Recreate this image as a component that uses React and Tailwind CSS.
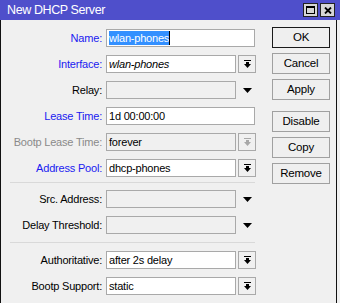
import React from "react";

const FONT = { fontFamily: '"Liberation Sans", Arial, sans-serif' };

const ComboArrow = ({ disabled }) => (
    <svg width="7" height="8" viewBox="0 0 7 8" shapeRendering="crispEdges" className={disabled ? "fill-[#a8a8a8]" : "fill-black"}>
        <rect x="0" y="0" width="7" height="1" />
        <rect x="2" y="2" width="3" height="2" />
        <path d="M0 4h7l-3.5 4z" shapeRendering="geometricPrecision" />
    </svg>
);

const DropTriangle = () => (
    <svg width="9" height="5" viewBox="0 0 9 5" className="fill-black">
        <path d="M0 0h9l-4.5 5z" />
    </svg>
);

const labelColors = {
    blue: "text-[#1a1af0]",
    grey: "text-[#8a8a8a]",
    black: "text-black",
};

const Row = ({ label, color = "black", value, italic, selected, kind }) => {
    // kind: text | combo | disabled | readonly
    const grey = kind === "disabled" || kind === "readonly";
    return (
        <div className="flex items-center h-[18px]">
            <div className={`w-[101px] text-right text-[11px] tracking-[-0.2px] whitespace-nowrap ${labelColors[color]}`}>
                {label}:
            </div>
            <div className="ml-[4px] flex items-center">
                <div
                    className={`h-[18px] border border-[#a9a9a9] flex items-center pl-[2px] text-[11px] tracking-[-0.2px] text-black overflow-hidden whitespace-nowrap ${kind === "text" ? "w-[149px]" : "w-[130px]"} ${grey ? "bg-[#f0f0f0]" : "bg-white"} ${italic ? "italic" : ""}`}
                >
                    {selected ? (
                        <>
                            <span className="bg-[#3390ff] text-white h-[14px] leading-[14px]">{value}</span>
                            <span className="w-px h-[14px] bg-black" />
                        </>
                    ) : (
                        value
                    )}
                </div>
                {kind === "combo" || kind === "readonly" ? (
                    <div className="ml-[2px] w-[18px] h-[18px] border border-[#a9a9a9] bg-[#f0f0f0] flex items-center justify-center">
                        <ComboArrow disabled={kind === "readonly"} />
                    </div>
                ) : null}
                {kind === "disabled" ? (
                    <div className="ml-[2px] w-[18px] h-[18px] flex items-center justify-center">
                        <DropTriangle />
                    </div>
                ) : null}
            </div>
        </div>
    );
};

const Separator = ({ className }) => (
    <div className={`ml-[9px] w-[245px] h-px bg-[#d9d9d9] ${className}`} />
);

const Btn = ({ children, isDefault, className = "" }) => (
    <button
        className={`w-[58px] h-[21px] bg-[#efefef] border text-[11.5px] tracking-[-0.2px] text-black flex items-center justify-center ${isDefault ? "border-[#1a1a1a]" : "border-[#a0a0a0]"} ${className}`}
    >
        {children}
    </button>
);

export default function App() {
    return (
        <div className="w-[340px] h-[303px] bg-[#f0f0f0] overflow-hidden flex flex-col" style={FONT}>
            {/* title bar */}
            <div className="h-[20px] bg-[#4f4fcb] flex items-center justify-between pl-[7px] pr-[5px]">
                <span className="text-white text-[12.5px] tracking-[-0.4px]">New DHCP Server</span>
                <div className="flex gap-[2px]">
                    <div className="w-[15px] h-[14px] bg-[#d6d6d6] border border-[#222] flex items-center justify-center">
                        <svg width="9" height="8" viewBox="0 0 9 8" shapeRendering="crispEdges">
                            <rect x="0.5" y="0.5" width="8" height="7" fill="none" stroke="black" />
                            <rect x="0" y="0" width="9" height="2" fill="black" />
                        </svg>
                    </div>
                    <div className="w-[15px] h-[14px] bg-[#d6d6d6] border border-[#222] flex items-center justify-center">
                        <svg width="8" height="7" viewBox="0 0 8 7">
                            <path d="M1 0.5l6 6M7 0.5l-6 6" stroke="black" strokeWidth="1.8" />
                        </svg>
                    </div>
                </div>
            </div>

            {/* body */}
            <div className="flex-1 w-[337px] border-l border-r border-[#111] flex">
                <div className="flex flex-col pt-[9px]">
                    <div className="flex flex-col gap-2">
                        <Row label="Name" color="blue" value="wlan-phones" selected kind="text" />
                        <Row label="Interface" color="blue" value="wlan-phones" italic kind="combo" />
                        <Row label="Relay" kind="disabled" />
                        <Row label="Lease Time" color="blue" value="1d 00:00:00" kind="text" />
                        <Row label="Bootp Lease Time" color="grey" value="forever" kind="readonly" />
                        <Row label="Address Pool" color="blue" value="dhcp-phones" kind="combo" />
                    </div>
                    <Separator className="mt-[5px]" />
                    <div className="flex flex-col gap-2 mt-[7px]">
                        <Row label="Src. Address" kind="disabled" />
                        <Row label="Delay Threshold" kind="disabled" />
                    </div>
                    <Separator className="mt-[8px]" />
                    <div className="flex flex-col gap-2 mt-[8px]">
                        <Row label="Authoritative" value="after 2s delay" kind="combo" />
                        <Row label="Bootp Support" value="static" kind="combo" />
                    </div>
                </div>

                <div className="ml-[16px] pt-[7px] flex flex-col gap-[5px]">
                    <Btn isDefault>OK</Btn>
                    <Btn>Cancel</Btn>
                    <Btn>Apply</Btn>
                    <Btn className="mt-[6px]">Disable</Btn>
                    <Btn>Copy</Btn>
                    <Btn>Remove</Btn>
                </div>
            </div>
        </div>
    );
}
